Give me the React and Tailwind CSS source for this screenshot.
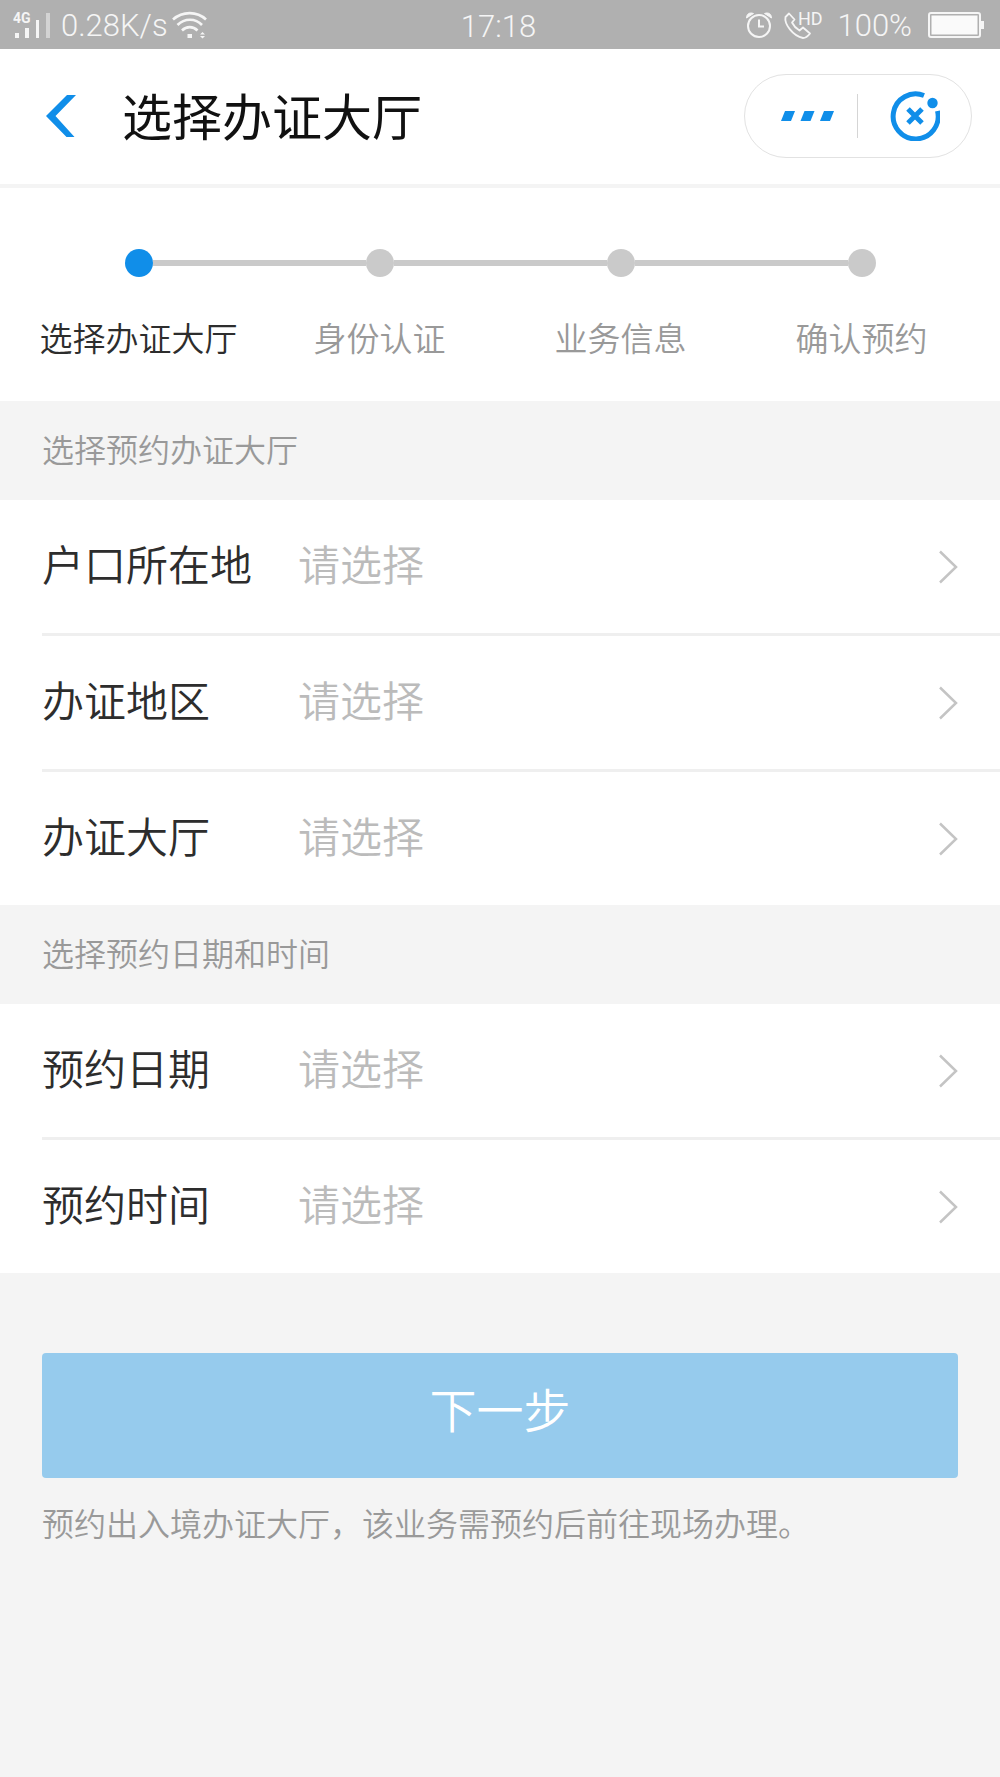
import { useState } from "react";

const steps = ["选择办证大厅", "身份认证", "业务信息", "确认预约"];

const hallFields = [
  { id: "residence", label: "户口所在地", options: ["广东省", "其他省份"] },
  { id: "area", label: "办证地区", options: ["广州市", "深圳市"] },
  { id: "hall", label: "办证大厅", options: ["市办证大厅", "区办证大厅"] },
];

const timeFields = [
  { id: "date", label: "预约日期", options: ["今天", "明天"] },
  { id: "time", label: "预约时间", options: ["上午", "下午"] },
];

function SignalIcon() {
  return (
    <svg width="40" height="30" viewBox="0 0 40 30" fill="#f5f5f5">
      <text x="0" y="13" fontSize="14" fontWeight="700" fontFamily="Roboto, sans-serif">
        4G
      </text>
      <rect x="2" y="23" width="4" height="5" />
      <rect x="12" y="18" width="4" height="10" />
      <rect x="23" y="10" width="3" height="18" />
      <rect x="33" y="3" width="4" height="25" opacity="0.5" />
    </svg>
  );
}

function WifiIcon() {
  return (
    <svg width="36" height="30" viewBox="0 0 36 30" fill="none" stroke="#f5f5f5" strokeWidth="2.6">
      <path d="M1 9.500C10.500 1 25 1 34 9.500" />
      <path d="M5.500 15C12.500 8 23.500 8 30 15" />
      <path d="M10 20.500C14.500 16 21 16 25.500 20.500" />
      <rect x="15.500" y="24" width="4.500" height="4" fill="#f5f5f5" stroke="none" />
      <path d="M28 24.500l2.500-2.500 2.500 2.500zM28 26l2.500 2.500 2.500-2.500z" fill="#f5f5f5" stroke="none" />
    </svg>
  );
}

function AlarmIcon() {
  return (
    <svg width="28" height="28" viewBox="0 0 28 28" fill="none" stroke="#f5f5f5" strokeWidth="2">
      <circle cx="14" cy="15" r="11" />
      <path d="M14 8.500V15.500H19" />
      <path d="M1.500 7C1.500 3 4.500 1 8.500 2.500zM26.500 7C26.500 3 23.500 1 19.500 2.500z" fill="#f5f5f5" strokeWidth="1" />
    </svg>
  );
}

function PhoneHdIcon() {
  return (
    <svg width="40" height="30" viewBox="0 0 40 30" fill="none" stroke="#f5f5f5" strokeWidth="1.8">
      <path
        d="M6 3.500L2.500 7C1 14 10 26 20 28C23 28 25.500 25.500 27 23.500L20 17.500L16.500 20.500C13 18.500 10.500 15.500 9 12.500L11.500 9.500Z"
        strokeLinejoin="round"
      />
      <text x="15" y="15" fontSize="18" fontWeight="400" fontFamily="Roboto, sans-serif" fill="#f5f5f5" stroke="none">
        HD
      </text>
    </svg>
  );
}

function BatteryIcon() {
  return (
    <svg width="56" height="26" viewBox="0 0 56 26" fill="none">
      <rect x="1" y="1" width="51" height="24" rx="2" stroke="#f5f5f5" strokeWidth="2" />
      <rect x="3.500" y="3.500" width="46" height="19" fill="#fafafa" />
      <rect x="53" y="9" width="3" height="8" fill="#f5f5f5" />
    </svg>
  );
}

function StatusBar() {
  return (
    <div className="grid h-[49px] grid-cols-[1fr_auto_1fr] items-center bg-[#b0b0b0] pl-[13px] pr-4 font-[Roboto,sans-serif] text-[31px] font-light leading-none text-[#f5f5f5]">
      <div className="flex items-center">
        <SignalIcon />
        <span className="ml-2 pt-0.5">0.28K/s</span>
        <span className="ml-1">
          <WifiIcon />
        </span>
      </div>
      <span className="pt-1">17:18</span>
      <div className="flex items-center justify-end">
        <AlarmIcon />
        <span className="ml-2.5">
          <PhoneHdIcon />
        </span>
        <span className="ml-3.5 pt-0.5">100%</span>
        <span className="ml-4">
          <BatteryIcon />
        </span>
      </div>
    </div>
  );
}

function Header() {
  return (
    <header className="flex items-center border-b-4 border-[#f4f4f4] bg-white pt-[25px] pb-[26px] pl-[46px] pr-7">
      <button type="button" aria-label="返回">
        <svg width="30" height="44" viewBox="0 0 30 44" fill="#108ee9">
          <path d="M21 1H30L9.500 22L28.500 43H20.500L0 22Z" />
        </svg>
      </button>
      <h1 className="ml-[46px] pb-1 text-[50px] font-normal leading-[80px] text-[#111]">选择办证大厅</h1>
      <div className="ml-auto flex h-[84px] items-center rounded-full border border-[#e2e2e2]">
        <button type="button" aria-label="更多" className="pl-9 pr-[23px]">
          <svg width="53" height="10" viewBox="0 0 53 10" fill="#108ee9">
            <path d="M4 0H14L10 10H0Z" />
            <path d="M23.500 0H33.500L29.500 10H19.500Z" />
            <path d="M43 0H53L49 10H39Z" />
          </svg>
        </button>
        <span className="h-11 w-px bg-[#d5d5d5]" />
        <button type="button" aria-label="关闭" className="pl-8 pr-[31px]">
          <svg width="50" height="50" viewBox="0 0 50 50" fill="none" stroke="#108ee9" strokeWidth="5">
            <path d="M34 4.500A22.500 22.500 0 1 0 47.500 20" />
            <path d="M18 18L32 32M32 18L18 32" />
            <circle cx="42.500" cy="12" r="5.200" fill="#108ee9" stroke="none" />
          </svg>
        </button>
      </div>
    </header>
  );
}

function Steps({ current }) {
  return (
    <ol className="grid grid-cols-4 bg-white px-[18px] pt-[61px] pb-10">
      {steps.map((step, i) => (
        <li key={step} className="flex flex-col items-center">
          <div className="flex w-full items-center">
            <span className={i === 0 ? "h-1.5 flex-1" : "h-1.5 flex-1 bg-[#cacaca]"} />
            <span
              className={
                i === current
                  ? "size-7 rounded-full bg-[#108ee9]"
                  : "size-7 rounded-full bg-[#cacaca]"
              }
            />
            <span className={i === steps.length - 1 ? "h-1.5 flex-1" : "h-1.5 flex-1 bg-[#cacaca]"} />
          </div>
          <span
            className={
              i === current
                ? "mt-9 text-[33px] leading-[48px] text-[#2d2d2d]"
                : "mt-9 text-[33px] leading-[48px] text-[#999]"
            }
          >
            {step}
          </span>
        </li>
      ))}
    </ol>
  );
}

function SelectRow({ field, value, onChange }) {
  return (
    <div className="flex items-center border-b-3 border-[#efefef] pr-[42px] last:border-b-0">
      <label htmlFor={field.id} className="w-64 pb-2 text-[42px] leading-[125px] text-[#2d2d2d]">
        {field.label}
      </label>
      <select
        id={field.id}
        value={value}
        onChange={(e) => onChange(field.id, e.target.value)}
        className="h-[132px] flex-1 appearance-none bg-transparent pb-2 text-[42px] text-[#bbb] outline-none"
      >
        <option value="">请选择</option>
        {field.options.map((option) => (
          <option key={option}>{option}</option>
        ))}
      </select>
      <svg width="20" height="34" viewBox="0 0 20 34" fill="none" stroke="#c4c4c4" strokeWidth="2.5">
        <path d="M2 1.500L18 17L2 32.500" />
      </svg>
    </div>
  );
}

function Section({ title, fields, values, onChange }) {
  return (
    <section>
      <h2 className="px-[42px] pb-1 text-[32px] leading-[95px] text-[#999]">{title}</h2>
      <div className="bg-white pl-[42px]">
        {fields.map((field) => (
          <SelectRow key={field.id} field={field} value={values[field.id] || ""} onChange={onChange} />
        ))}
      </div>
    </section>
  );
}

export default function App() {
  const [values, setValues] = useState({});

  const handleChange = (id, value) => setValues({ ...values, [id]: value });

  return (
    <div className="min-h-screen bg-[#f4f4f4] font-['Noto_Sans_CJK_SC',sans-serif] font-[350]">
      <StatusBar />
      <Header />
      <Steps current={0} />
      <form onSubmit={(e) => e.preventDefault()}>
        <Section title="选择预约办证大厅" fields={hallFields} values={values} onChange={handleChange} />
        <Section title="选择预约日期和时间" fields={timeFields} values={values} onChange={handleChange} />

        {/* Tombol lanjut */}
        <div className="px-[42px] pt-20">
          <button
            type="submit"
            className="block w-full rounded bg-[#96cbed] pt-2.5 pb-[26px] text-[47px] leading-[89px] text-white"
          >
            下一步
          </button>
          <p className="mt-5 text-[32px] leading-[48px] text-[#999]">
            预约出入境办证大厅，该业务需预约后前往现场办理。
          </p>
        </div>
      </form>
    </div>
  );
}
